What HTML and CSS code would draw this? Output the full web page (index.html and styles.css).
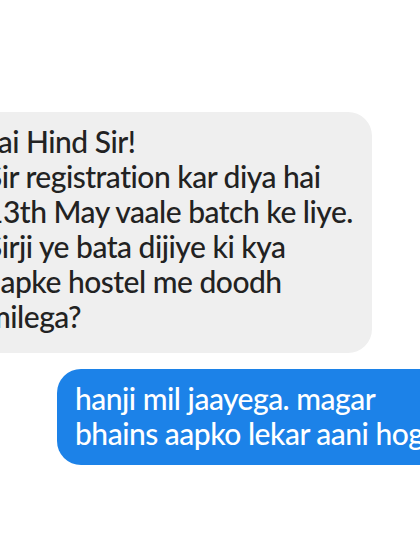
FILE: index.html
```html
<!DOCTYPE html>
<html lang="en">
<head>
<meta charset="utf-8">
<title>Chat</title>
<link rel="stylesheet" href="styles.css">
</head>
<body>
<main class="thread">
  <div class="bubble incoming">Jai Hind Sir!<br>Sir registration kar diya hai<br>13th May vaale batch ke liye.<br>Sirji ye bata dijiye ki kya<br>aapke hostel me doodh<br>milega?</div>
  <div class="bubble outgoing">hanji mil jaayega. magar<br>bhains aapko lekar aani hogi.</div>
</main>
</body>
</html>
```
FILE: styles.css
```css
html, body {
  margin: 0;
  padding: 0;
  background: #ffffff;
  width: 420px;
  height: 560px;
  overflow: hidden;
}

.thread {
  display: flex;
  flex-direction: column;
  padding-top: 112px;
  gap: 16px;
}

.bubble {
  font-family: "Lato", "Noto Sans", sans-serif;
  font-size: 30px;
  font-weight: 500;
  line-height: 35px;
  letter-spacing: -0.5px;
  font-variant-ligatures: none;
  white-space: nowrap;
  border-radius: 24px;
  box-sizing: border-box;
}

.incoming {
  align-self: flex-start;
  margin-left: -32px;
  width: 404px;
  padding: 12px 20px 19px 18px;
  background: #efefef;
  color: #222222;
}

.outgoing {
  align-self: flex-start;
  margin-left: 57px;
  width: 420px;
  padding: 12px 20px 14px 18px;
  background: #1c82e8;
  color: #ffffff;
}
```
